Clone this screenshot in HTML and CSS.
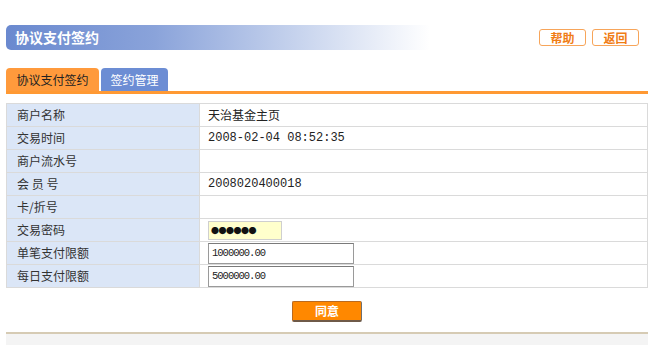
FILE: index.html
```html
<!DOCTYPE html>
<html>
<head>
<meta charset="utf-8">
<link rel="stylesheet" href="styles.css">
</head>
<body>
<div class="page">
  <div class="header">
    <div class="title">协议支付签约</div>
    <div class="actions">
      <span class="btn-sm">帮助</span>
      <span class="btn-sm">返回</span>
    </div>
  </div>
  <div class="tabs">
    <span class="tab active">协议支付签约</span>
    <span class="tab">签约管理</span>
  </div>
  <table class="form">
    <tr><td class="label">商户名称</td><td class="value">天治基金主页</td></tr>
    <tr><td class="label">交易时间</td><td class="value num">2008-02-04 08:52:35</td></tr>
    <tr><td class="label">商户流水号</td><td class="value"></td></tr>
    <tr><td class="label">会&nbsp;员&nbsp;号</td><td class="value num">2008020400018</td></tr>
    <tr><td class="label">卡/折号</td><td class="value"></td></tr>
    <tr><td class="label">交易密码</td><td class="value"><span class="pwd">●●●●●●</span></td></tr>
    <tr><td class="label">单笔支付限额</td><td class="value"><span class="input">1000000.00</span></td></tr>
    <tr><td class="label">每日支付限额</td><td class="value"><span class="input">5000000.00</span></td></tr>
  </table>
  <div class="submit-row"><span class="btn-main">同意</span></div>
  <div class="sep"></div>
  <div class="footer"></div>
</div>
</body>
</html>
```
FILE: styles.css
```css
html, body { margin: 0; padding: 0; background: #fff; }
body { font-family: "Noto Sans CJK SC", sans-serif; font-size: 12px; color: #222; }
.page { padding: 25px 2px 0 6px; }
.header { display: flex; align-items: center; justify-content: space-between; height: 25px; }
.title {
  width: 424px; height: 25px; box-sizing: border-box; padding-left: 9px;
  background: linear-gradient(to right, #6a89cf 0%, #8aa3da 35%, #c9d5ee 70%, #ffffff 100%);
  border-radius: 5px 0 0 5px;
  color: #fff; font-weight: bold; font-size: 14px; line-height: 25px;
}
.actions { display: flex; gap: 6px; padding-right: 9px; }
.btn-sm {
  display: inline-block; width: 47px; height: 17px; box-sizing: border-box;
  border: 1px solid #f7a55a; border-radius: 3px; background: #fff;
  color: #f07c14; font-weight: bold; font-size: 12px; line-height: 15px; text-align: center;
}
.tabs { display: flex; gap: 2px; margin-top: 18px; height: 23px; border-bottom: 3px solid #ff9933; }
.tab {
  display: inline-block; height: 23px; width: 67px; box-sizing: border-box; text-align: center;
  background: #6c8dd4; color: #fff; border-radius: 4px 4px 0 0; line-height: 23px; font-size: 12px;
}
.tab.active { background: #ff9a3c; color: #222; width: 93px; }
.form { width: 642px; border-collapse: collapse; margin-top: 9px; border: 1px solid #dadada; }
.form td { height: 22px; border: 1px solid #dadada; padding: 0; font-size: 12px; line-height: 14px; }
.label { width: 182px; background: #dbe6f7; padding-left: 10px !important; color: #333; }
.value { padding-left: 8px !important; background: #fff; color: #222; }
.num { font-family: "Liberation Mono", monospace; font-size: 10.5px; }
.pwd {
  display: inline-block; width: 74px; height: 19px; box-sizing: border-box; background: #ffffcc;
  border: 1px solid #cfcfcf; font-size: 8px; line-height: 17px; padding-left: 2px; letter-spacing: -0.5px; color: #111; vertical-align: middle;
}
.input {
  display: inline-block; width: 146px; height: 21px; box-sizing: border-box; border: 1px solid #9a9a9a;
  border-top-color: #7a7a7a; font-family: "Liberation Mono", monospace; font-size: 10.5px; letter-spacing: -1px; line-height: 19px; padding-left: 3px; vertical-align: middle;
}
.submit-row { display: flex; justify-content: center; margin-top: 13px; }
.btn-main {
  display: inline-block; width: 70px; height: 21px; box-sizing: border-box;
  background: #ff8800; border: 1px solid #b96a20; border-right-color: #6f6f6f; border-bottom: 2px solid #6f5a48;
  border-radius: 2px; color: #fff; font-weight: bold; text-align: center; line-height: 18px; font-size: 12px;
}
.sep { margin-top: 10px; height: 2px; background: #d6cbb4; width: 642px; }
.footer { height: 12px; background: #f4f4f4; width: 642px; }
```
